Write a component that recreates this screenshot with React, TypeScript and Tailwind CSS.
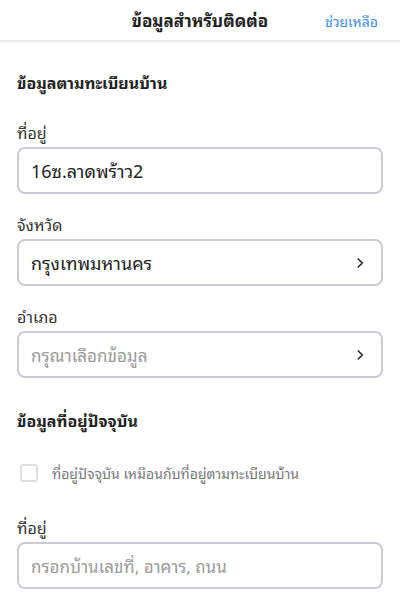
import React from 'react';

function Chevron() {
  return (
    <svg width="14" height="14" viewBox="0 0 24 24" fill="none" stroke="#222" strokeWidth="2.6" strokeLinecap="round" strokeLinejoin="round">
      <path d="M9 5l7 7-7 7" />
    </svg>
  );
}

function Label({ children }: { children: React.ReactNode }) {
  return <div className="text-[16px] leading-6 text-[#333] mb-[3px]">{children}</div>;
}

function Field({ value, placeholder, select }: { value?: string; placeholder?: string; select?: boolean }) {
  return (
    <div className="h-[47px] rounded-[8px] border-2 border-[#c9cbd8] flex items-center justify-between px-[12px]">
      {value ? (
        <span className="text-[18px] text-[#222]">{value}</span>
      ) : (
        <span className="text-[17px] text-[#9a9a9a]">{placeholder}</span>
      )}
      {select && (
        <span className="mr-[2px]">
          <Chevron />
        </span>
      )}
    </div>
  );
}

export default function App() {
  return (
    <div className="w-[400px] h-[600px] overflow-hidden bg-white" style={{ fontFamily: '"Noto Sans Thai Looped", "Noto Sans", "Noto Sans Thai", sans-serif' }}>
      <div className="h-[42px] relative flex items-center justify-center border-b-2 border-[#ebebeb]">
        <span className="text-[17px] font-bold text-[#222]">ข้อมูลสำหรับติดต่อ</span>
        <span className="absolute right-[22px] top-[10px] text-[14px] text-[#3a8ee6]">ช่วยเหลือ</span>
      </div>
      <div className="px-[17px]">
        <div className="pt-[28px] text-[16px] font-bold text-[#222] leading-6">ข้อมูลตามทะเบียนบ้าน</div>
        <div className="mt-[26px]">
          <Label>ที่อยู่</Label>
          <Field value="16ซ.ลาดพร้าว2" />
        </div>
        <div className="mt-[18px]">
          <Label>จังหวัด</Label>
          <Field value="กรุงเทพมหานคร" select />
        </div>
        <div className="mt-[18px]">
          <Label>อำเภอ</Label>
          <Field placeholder="กรุณาเลือกข้อมูล" select />
        </div>
        <div className="mt-[30px] text-[16px] font-bold text-[#222] leading-6">ข้อมูลที่อยู่ปัจจุบัน</div>
        <div className="mt-[30px] flex items-center pl-[3px]">
          <div className="w-[18px] h-[18px] rounded-[3px] border-2 border-[#e0e0e0]" />
          <span className="ml-[14px] text-[14px] text-[#777]">ที่อยู่ปัจจุบัน เหมือนกับที่อยู่ตามทะเบียนบ้าน</span>
        </div>
        <div className="mt-[32px]">
          <Label>ที่อยู่</Label>
          <Field placeholder="กรอกบ้านเลขที่, อาคาร, ถนน" />
        </div>
      </div>
    </div>
  );
}
